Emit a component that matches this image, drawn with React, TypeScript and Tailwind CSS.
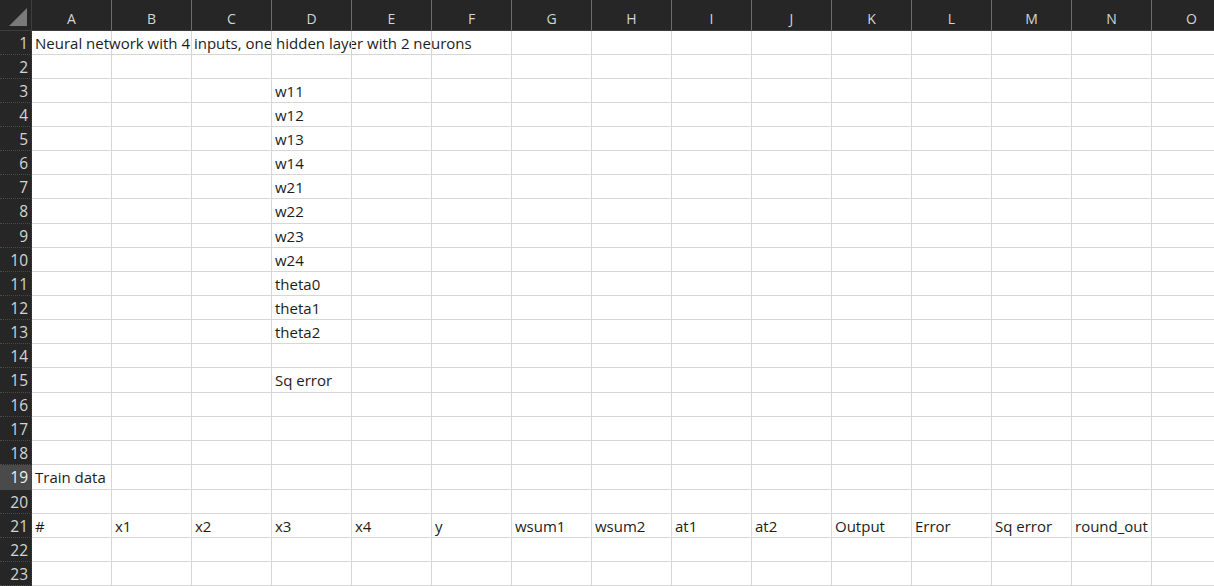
import React from 'react';

const COLS = ['A', 'B', 'C', 'D', 'E', 'F', 'G', 'H', 'I', 'J', 'K', 'L', 'M', 'N', 'O'];

// sparse cell contents: row -> col index -> text
const CELLS: Record<number, Record<number, string>> = {
  1: { 0: 'Neural network with 4 inputs, one hidden layer with 2 neurons' },
  3: { 3: 'w11' },
  4: { 3: 'w12' },
  5: { 3: 'w13' },
  6: { 3: 'w14' },
  7: { 3: 'w21' },
  8: { 3: 'w22' },
  9: { 3: 'w23' },
  10: { 3: 'w24' },
  11: { 3: 'theta0' },
  12: { 3: 'theta1' },
  13: { 3: 'theta2' },
  15: { 3: 'Sq error' },
  19: { 0: 'Train data' },
  21: {
    0: '#', 1: 'x1', 2: 'x2', 3: 'x3', 4: 'x4', 5: 'y', 6: 'wsum1', 7: 'wsum2',
    8: 'at1', 9: 'at2', 10: 'Output', 11: 'Error', 12: 'Sq error', 13: 'round_out',
  },
};

const ROWS = Array.from({ length: 23 }, (_, i) => i + 1);
const TALL_ROWS = new Set([8, 15, 19]);
const SELECTED_ROW = 19;

function Corner() {
  return (
    <div className="h-[31px] w-[32px] shrink-0 bg-[#262626] border-r border-b border-[#3d3d3d] flex items-end justify-end pr-[3px] pb-[3px]">
      <svg width="20" height="20" viewBox="0 0 20 20">
        <polygon points="19,1 19,19 1,19" fill="#7a7a7a" />
      </svg>
    </div>
  );
}

export default function App() {
  return (
    <div className="w-[1214px] h-[586px] overflow-hidden bg-white font-['Open_Sans','Noto_Sans',sans-serif]">
      {/* column headers */}
      <div className="flex">
        <Corner />
        {COLS.map((c) => (
          <div
            key={c}
            className="h-[31px] w-[80px] shrink-0 bg-[#262626] border-r border-dotted border-[#6b6b6b] border-b-[#3d3d3d] border-b border-solid flex items-center justify-center pt-[6px] text-[14px] text-[#d4d4d4]"
          >
            {c}
          </div>
        ))}
      </div>

      {ROWS.map((r) => (
        <div key={r} className={`flex ${TALL_ROWS.has(r) ? 'h-[25px]' : 'h-[24px]'}`}>
          <div
            className={`h-full w-[32px] shrink-0 border-r border-[#3d3d3d] border-b border-b-[#4a4a4a] border-dotted flex items-center justify-end pr-[3px] pt-[2px] text-[15.5px] ${
              r === SELECTED_ROW ? 'bg-[#4a4a4a] text-[#f0f0f0]' : 'bg-[#262626] text-[#d4d4d4]'
            }`}
          >
            {r}
          </div>
          {COLS.map((c, ci) => (
            <div
              key={c}
              className="relative h-full w-[80px] shrink-0 border-r border-b border-[#d6d6d6]"
            >
              {CELLS[r]?.[ci] && (
                <span className="absolute left-[3px] top-[2px] whitespace-nowrap text-[15px] text-[#1c1c1c] leading-[21px]">
                  {CELLS[r][ci]}
                </span>
              )}
            </div>
          ))}
        </div>
      ))}
    </div>
  );
}
